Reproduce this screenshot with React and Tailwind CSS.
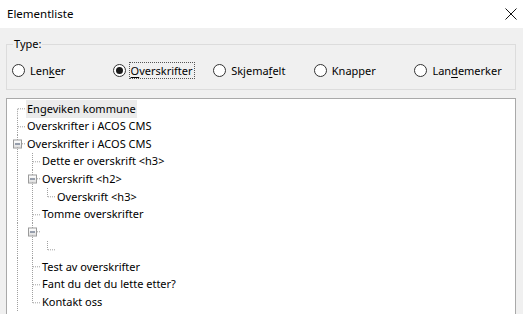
import React from "react";

const radios = [
  { pre: "Len", key: "k", post: "er" },
  { pre: "", key: "O", post: "verskrifter", checked: true },
  { pre: "Skjema", key: "f", post: "elt" },
  { pre: "Knapper", key: "", post: "" },
  { pre: "Lan", key: "d", post: "emerker" },
];

// guides: one flag per ancestor level, true = that level's line continues
const rows = [
  { level: 0, text: "Engeviken kommune", first: true, next: true, selected: true },
  { level: 0, text: "Overskrifter i ACOS CMS", next: true },
  { level: 0, text: "Overskrifter i ACOS CMS", next: true, open: true },
  { level: 1, text: "Dette er overskrift <h3>", guides: [true], next: true },
  { level: 1, text: "Overskrift <h2>", guides: [true], next: true, open: true },
  { level: 2, text: "Overskrift <h3>", guides: [true, true], next: false },
  { level: 1, text: "Tomme overskrifter", guides: [true], next: true },
  { level: 1, text: "", guides: [true], next: true, open: true },
  { level: 2, text: "", guides: [true, true], next: false },
  { level: 1, text: "Test av overskrifter", guides: [true], next: true },
  { level: 1, text: "Fant du det du lette etter?", guides: [true], next: true },
  { level: 1, text: "Kontakt oss", guides: [true], next: false },
];

const dot = { stroke: "#a0a0a0", strokeWidth: 1, strokeDasharray: "1 1" };

const GuideCell = ({ on }) => (
  <div className="w-[15px] h-full shrink-0">
    {on && (
      <svg width="15" height="100%" className="block h-full">
        <line x1="7.5" y1="0" x2="7.5" y2="100%" style={dot} />
      </svg>
    )}
  </div>
);

const OwnCell = ({ first, next, open }) => (
  <div className="w-[15px] h-full shrink-0 relative">
    <svg width="15" height="100%" className="absolute inset-0 h-full">
      <line x1="7.5" y1={first ? "50%" : "0"} x2="7.5" y2={next ? "100%" : "50%"} style={dot} />
      <line x1="8" y1="50%" x2="15" y2="50%" style={dot} />
    </svg>
    {open && (
      <div className="absolute left-[3px] top-1/2 -translate-y-1/2 w-[9px] h-[9px] border border-[#9a9a9a] bg-gradient-to-b from-white to-[#dedede] flex items-center justify-center">
        <div className="w-[5px] h-[1px] bg-[#3f4f6a]" />
      </div>
    )}
  </div>
);

const RadioDot = ({ checked }) => (
  <div className="w-[13px] h-[13px] rounded-full border border-[#333] bg-white flex items-center justify-center shrink-0">
    {checked && <div className="w-[7px] h-[7px] rounded-full bg-[#1a1a1a]" />}
  </div>
);

const App = () => {
  return (
    <div
      className="w-[523px] h-[314px] bg-[#f0f0f0] flex flex-col overflow-hidden text-[11px] text-black"
      style={{ fontFamily: '"Noto Sans", "Open Sans", sans-serif' }}
    >
      {/* title bar */}
      <div className="h-[28px] bg-white flex items-center justify-between pl-[7px] pr-[6px] shrink-0">
        <span className="leading-none text-[11.5px]">Elementliste</span>
        <svg width="12" height="12" viewBox="0 0 12 12">
          <path d="M0.5 0.5 L11.5 11.5 M11.5 0.5 L0.5 11.5" stroke="#111" strokeWidth="1" />
        </svg>
      </div>

      {/* Type group */}
      <div className="relative ml-[6px] mt-[16px] w-[510px] h-[46px] border border-[#dcdcdc] shrink-0 pl-[5px] pt-[17px]">
        <span className="absolute left-[6px] -top-[9px] px-[1px] bg-[#f0f0f0] leading-[16px]">Type:</span>
        <div className="flex">
          {radios.map((r, i) => (
            <div key={i} className="w-[100.6px] flex items-center gap-[3px] shrink-0">
              <RadioDot checked={r.checked} />
              <span
                className={`leading-[15px] px-[1px] border border-dotted ${
                  r.checked ? "border-[#555]" : "border-transparent"
                }`}
              >
                {r.pre}
                {r.key && <span className="underline underline-offset-2">{r.key}</span>}
                {r.post}
              </span>
            </div>
          ))}
        </div>
      </div>

      {/* tree */}
      <div className="ml-[6px] mt-[8px] w-[510px] flex-1 bg-white border border-[#a9a9a9] border-b-0 pt-[1px] pl-[3px] overflow-hidden">
        {rows.map((r, i) => (
          <div key={i} className="h-[17.6px] flex items-stretch">
            {(r.guides || []).map((g, j) => (
              <GuideCell key={j} on={g} />
            ))}
            <OwnCell first={r.first} next={r.next} open={r.open} />
            {r.text && (
              <span
                className={`ml-[1px] px-[1px] flex items-center whitespace-nowrap ${
                  r.selected ? "bg-[#ebebeb]" : ""
                }`}
              >
                {r.text}
              </span>
            )}
          </div>
        ))}
      </div>
    </div>
  );
};

export default App;
